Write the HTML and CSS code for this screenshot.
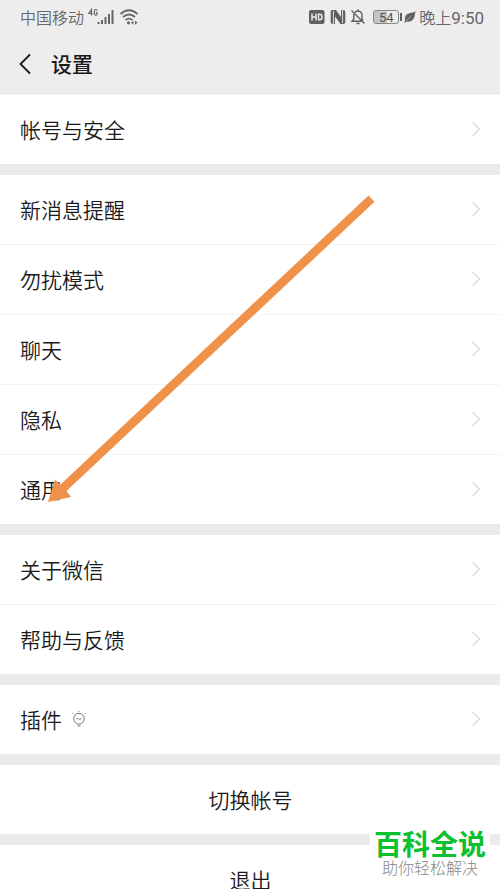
FILE: index.html
```html
<!DOCTYPE html>
<html lang="zh-CN">
<head>
<meta charset="utf-8">
<meta name="viewport" content="width=device-width, initial-scale=1">
<title>设置</title>
<link rel="stylesheet" href="styles.css">
</head>
<body>
<div class="screen">
  <header class="top">
    <div class="status">
      <div class="status-side">
        <span>中国移动</span>
        <svg class="signal" width="27" height="18" viewBox="0 0 27 18" fill="none" stroke="#666" stroke-width="1.2">
          <path d="M3.500 7.500V1.500L.8 5.500H4.600M9 2.800Q9 1.500 7.700 1.500T6.300 3V6Q6.300 7.200 7.700 7.200T9 6V4.600H7.700"/>
          <path stroke-width="2" d="M10.500 16V14M14 16V12M17.500 16V9M21 16V6M24.500 16V2"/>
        </svg>
        <svg class="wifi" width="20" height="18" viewBox="0 0 20 18" fill="none" stroke="#666" stroke-width="1.800">
          <path d="M1.500 6Q10-1.500 18.500 6M4 9Q10 4 16 9M6.500 12Q10 9.200 13.500 12"/>
          <circle cx="9.500" cy="14.800" r="1.600" fill="#666" stroke="none"/>
          <path fill="#666" stroke="none" d="M12 14.800L14.500 12.800V16.800ZM18.500 14.800L16 12.800V16.800Z"/>
        </svg>
      </div>
      <div class="status-side">
        <svg width="16" height="16" viewBox="0 0 16 16"><rect y="1" width="15.500" height="14" rx="2" fill="#606060"/><path d="M3 4.500V11.500M7 4.500V11.500M3 8H7M9.500 5.200H10.800Q13 5.200 13 8T10.800 10.800H9.500Z" fill="none" stroke="#eee" stroke-width="1.400"/></svg>
        <svg class="nfc" width="16" height="16" viewBox="0 0 16 16" fill="#606060"><path d="M2 1H6L11 8V1H13.500Q15.300 1 15.300 3V13Q15.300 15 13.500 15H10.500L5 7.500V15H2.500Q.7 15 .7 13V3Q.7 1 2 1Z"/><path d="M3.400 2V15M12.600 1V14" stroke="#eee" stroke-width=".9"/><path d="M5 3.500L11 11.700" stroke="#606060" stroke-width="2.600"/></svg>
        <svg class="bell" width="16" height="16" viewBox="0 0 16 16" fill="none" stroke="#606060" stroke-width="1.400"><path d="M5 3.500Q6 2 8 2Q12 2.200 12 6.500V10L13 11.500M3.800 5V10L2 12.300H11.500M6.500 14.500H9.500M8 .5V2M1.500 1.500L14.500 14.500"/></svg>
        <span class="battery">54</span>
        <svg class="leaf" width="12" height="14" viewBox="0 0 12 14"><path d="M11.500 1Q10.500 2.500 6 3Q0 4.500 1.200 10L.3 12L1.300 12.700L2.500 11.500Q8.500 12.500 10.300 7Q11 5 11.500 1Z" fill="#606060"/><path d="M2.500 10.500L7.500 6" stroke="#ddd" stroke-width=".6"/></svg>
        <span>晚上<span class="clock">9:50</span></span>
      </div>
    </div>
    <div class="title-bar">
      <button class="back" type="button" aria-label="返回">
        <svg width="12" height="22" viewBox="0 0 12 22" fill="none" stroke="#1a1a1a" stroke-width="1.800"><path d="M11 1.500L1.500 11L11 20.500"/></svg>
      </button>
      <h1>设置</h1>
    </div>
  </header>

  <main>
    <nav class="group">
      <a class="row" href="#account">帐号与安全<svg class="chevron" viewBox="0 0 10 18"><path d="M1.500 2L8.500 9L1.500 16"/></svg></a>
    </nav>
    <nav class="group">
      <a class="row" href="#notifications">新消息提醒<svg class="chevron" viewBox="0 0 10 18"><path d="M1.500 2L8.500 9L1.500 16"/></svg></a>
      <a class="row" href="#dnd">勿扰模式<svg class="chevron" viewBox="0 0 10 18"><path d="M1.500 2L8.500 9L1.500 16"/></svg></a>
      <a class="row" href="#chat">聊天<svg class="chevron" viewBox="0 0 10 18"><path d="M1.500 2L8.500 9L1.500 16"/></svg></a>
      <a class="row" href="#privacy">隐私<svg class="chevron" viewBox="0 0 10 18"><path d="M1.500 2L8.500 9L1.500 16"/></svg></a>
      <a class="row" href="#general">通用<svg class="chevron" viewBox="0 0 10 18"><path d="M1.500 2L8.500 9L1.500 16"/></svg></a>
    </nav>
    <nav class="group">
      <a class="row" href="#about">关于微信<svg class="chevron" viewBox="0 0 10 18"><path d="M1.500 2L8.500 9L1.500 16"/></svg></a>
      <a class="row" href="#help">帮助与反馈<svg class="chevron" viewBox="0 0 10 18"><path d="M1.500 2L8.500 9L1.500 16"/></svg></a>
    </nav>
    <nav class="group">
      <a class="row" href="#plugins">插件
        <svg class="bulb" width="14" height="16" viewBox="0 0 14 16" fill="none" stroke="#777" stroke-width="1"><path d="M5 13Q4.800 12.300 3.500 11.600A5.300 5.300 0 1 1 10.500 11.600Q9.200 12.300 9 13ZM5.500 15H8.500M4.300 8L5.800 7L7.500 8.800L9.500 7.200M7 0V1M.5 2L1.500 3M13.500 2L12.500 3"/></svg>
        <svg class="chevron" viewBox="0 0 10 18"><path d="M1.500 2L8.500 9L1.500 16"/></svg></a>
    </nav>
    <div class="group"><button class="row action" type="button">切换帐号</button></div>
    <div class="group"><button class="row action" type="button">退出</button></div>
  </main>

  <svg class="arrow" width="330" height="312" viewBox="0 0 330 312"><path d="M323.500 0.500L329.500 6.800L21.500 296L26 302L3 307L10 284.500L15.500 289.500Z" fill="#f0914a"/></svg>

  <aside class="watermark">
    <strong>百科全说</strong>
    <span>助你轻松解决</span>
  </aside>
</div>
</body>
</html>
```
FILE: styles.css
```css
* {
  box-sizing: border-box;
}

body {
  margin: 0;
  background: #ebebeb;
  color: #1a1a1a;
  font-family: "Noto Sans CJK SC", sans-serif;
  font-size: 21px;
}

.screen {
  position: relative;
  height: 100vh;
  overflow: hidden;
}

.top {
  padding-bottom: 9px;
  background: #ededed;
  border-bottom: 1px solid #e2e2e2;
}

.status {
  display: flex;
  justify-content: space-between;
  height: 34px;
  padding: 0 16px 0 20px;
  color: #666;
  font-size: 16px;
  font-weight: 350;
  line-height: 32px;
}

.status-side {
  display: flex;
  align-items: center;
}

.signal {
  margin: 0 4px;
}

.nfc {
  margin: 0 4px 0 5px;
}

.bell {
  margin-right: 7px;
}

.battery {
  position: relative;
  width: 26px;
  height: 14px;
  border: 1px solid #888;
  border-radius: 3px;
  background: linear-gradient(90deg, #c4c4c4 54%, #ededed 54%);
  color: #555;
  font-family: Roboto, sans-serif;
  font-size: 13px;
  font-weight: 400;
  line-height: 13px;
  text-align: center;
}

.battery::after {
  content: "";
  position: absolute;
  top: 2px;
  right: -4px;
  width: 2px;
  height: 8px;
  background: #606060;
}

.leaf {
  margin: 0 3px 0 5px;
}

.clock {
  font-family: Roboto, sans-serif;
  font-size: 17px;
  font-weight: 400;
}

.title-bar {
  display: flex;
  align-items: center;
  height: 50px;
  padding: 10px 19px 0;
}

.back {
  display: flex;
  width: 32px;
  padding: 0;
  border: 0;
  background: none;
}

h1 {
  margin: 0;
  padding-bottom: 2px;
  font-size: 21px;
  font-weight: 500;
  line-height: 38px;
}

.group {
  margin-bottom: 11px;
  background: #fff;
}

.group:first-child {
  padding-top: 1px;
}

.row {
  display: flex;
  align-items: center;
  height: 70px;
  padding: 0 19px 2px 20px;
  border-bottom: 1px solid #f3f3f3;
  color: inherit;
  font-weight: 350;
  text-decoration: none;
}

.row:last-child {
  height: 69px;
  border-bottom: 0;
}

.chevron {
  width: 10px;
  height: 18px;
  margin-left: auto;
  fill: none;
  stroke: #ddd;
  stroke-width: 1.5;
}

.bulb {
  margin-left: 10px;
}

.action {
  justify-content: center;
  width: 100%;
  border: 0;
  background: none;
  font-family: inherit;
  font-size: inherit;
}

.arrow {
  position: absolute;
  top: 195px;
  left: 45px;
}

.watermark {
  position: absolute;
  right: 10px;
  bottom: 0;
  display: flex;
  flex-direction: column;
  align-items: center;
  width: 120px;
  height: 60px;
  background: #fff;
  white-space: nowrap;
}

.watermark strong {
  color: #0dc02f;
  font-size: 28px;
  font-weight: 700;
  line-height: 29px;
}

.watermark span {
  color: #888;
  font-size: 16px;
  font-weight: 300;
  line-height: 19px;
}
```
